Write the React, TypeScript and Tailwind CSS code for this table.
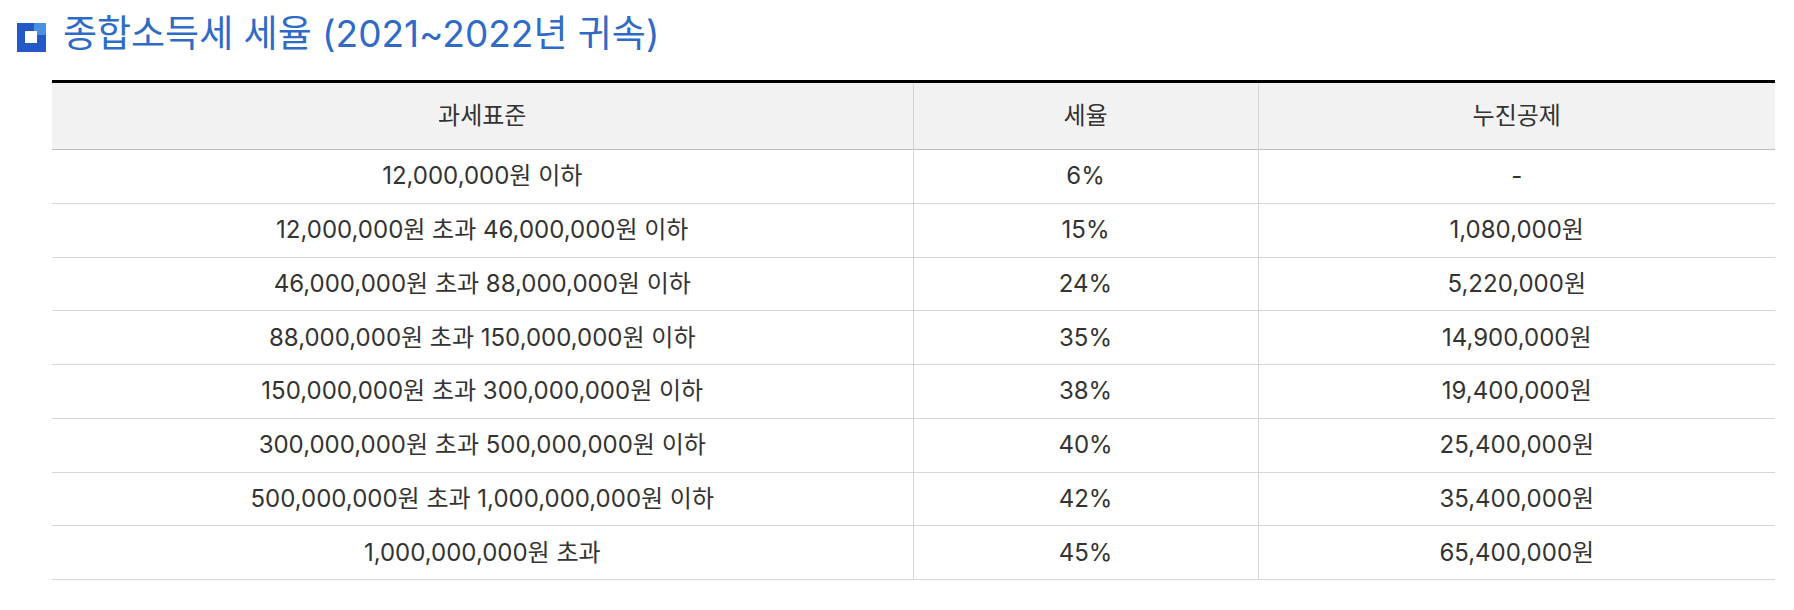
import React from "react";

const rows: [string, string, string][] = [
  ["12,000,000원 이하", "6%", "-"],
  ["12,000,000원 초과 46,000,000원 이하", "15%", "1,080,000원"],
  ["46,000,000원 초과 88,000,000원 이하", "24%", "5,220,000원"],
  ["88,000,000원 초과 150,000,000원 이하", "35%", "14,900,000원"],
  ["150,000,000원 초과 300,000,000원 이하", "38%", "19,400,000원"],
  ["300,000,000원 초과 500,000,000원 이하", "40%", "25,400,000원"],
  ["500,000,000원 초과 1,000,000,000원 이하", "42%", "35,400,000원"],
  ["1,000,000,000원 초과", "45%", "65,400,000원"],
];

export default function App() {
  return (
    <div
      className="w-[1794px] h-[610px] bg-white text-[#333]"
      style={{ fontFamily: 'Inter, "Noto Sans CJK KR", sans-serif' }}
    >
      <div className="h-[80px] pt-[23px] pl-[17px]">
        <div className="flex items-center h-[29px]">
          <div className="relative w-[29px] h-[29px] bg-[#2458c9] shrink-0">
            <div className="absolute right-0 top-0 w-[12px] h-[12px] bg-[#4a8fe0]" />
            <div className="absolute left-[8px] top-[8px] w-[12px] h-[12px] bg-white" />
          </div>
          <h2 className="ml-[17px] mb-[8px] text-[37px] leading-none text-[#2f6bc6] font-normal whitespace-nowrap">
            종합소득세 세율 (2021~2022년 귀속)
          </h2>
        </div>
      </div>
      <div className="ml-[52px] w-[1723px]">
        <table className="w-full border-collapse table-fixed text-[24px]">
          <colgroup>
            <col className="w-[861px]" />
            <col className="w-[345px]" />
            <col className="w-[517px]" />
          </colgroup>
          <thead>
            <tr className="h-[68px] bg-[#f2f2f2] border-t-[3px] border-t-black border-b border-b-[#bdbdbd]">
              <th className="font-normal border-r border-r-[#d6d6d6]">과세표준</th>
              <th className="font-normal border-r border-r-[#d6d6d6]">세율</th>
              <th className="font-normal">누진공제</th>
            </tr>
          </thead>
          <tbody>
            {rows.map((r, i) => (
              <tr key={i} className="h-[53.75px] border-b border-b-[#d6d6d6]">
                <td className="text-center border-r border-r-[#d6d6d6] p-0">{r[0]}</td>
                <td className="text-center border-r border-r-[#d6d6d6] p-0">{r[1]}</td>
                <td className="text-center p-0">{r[2]}</td>
              </tr>
            ))}
          </tbody>
        </table>
      </div>
    </div>
  );
}
